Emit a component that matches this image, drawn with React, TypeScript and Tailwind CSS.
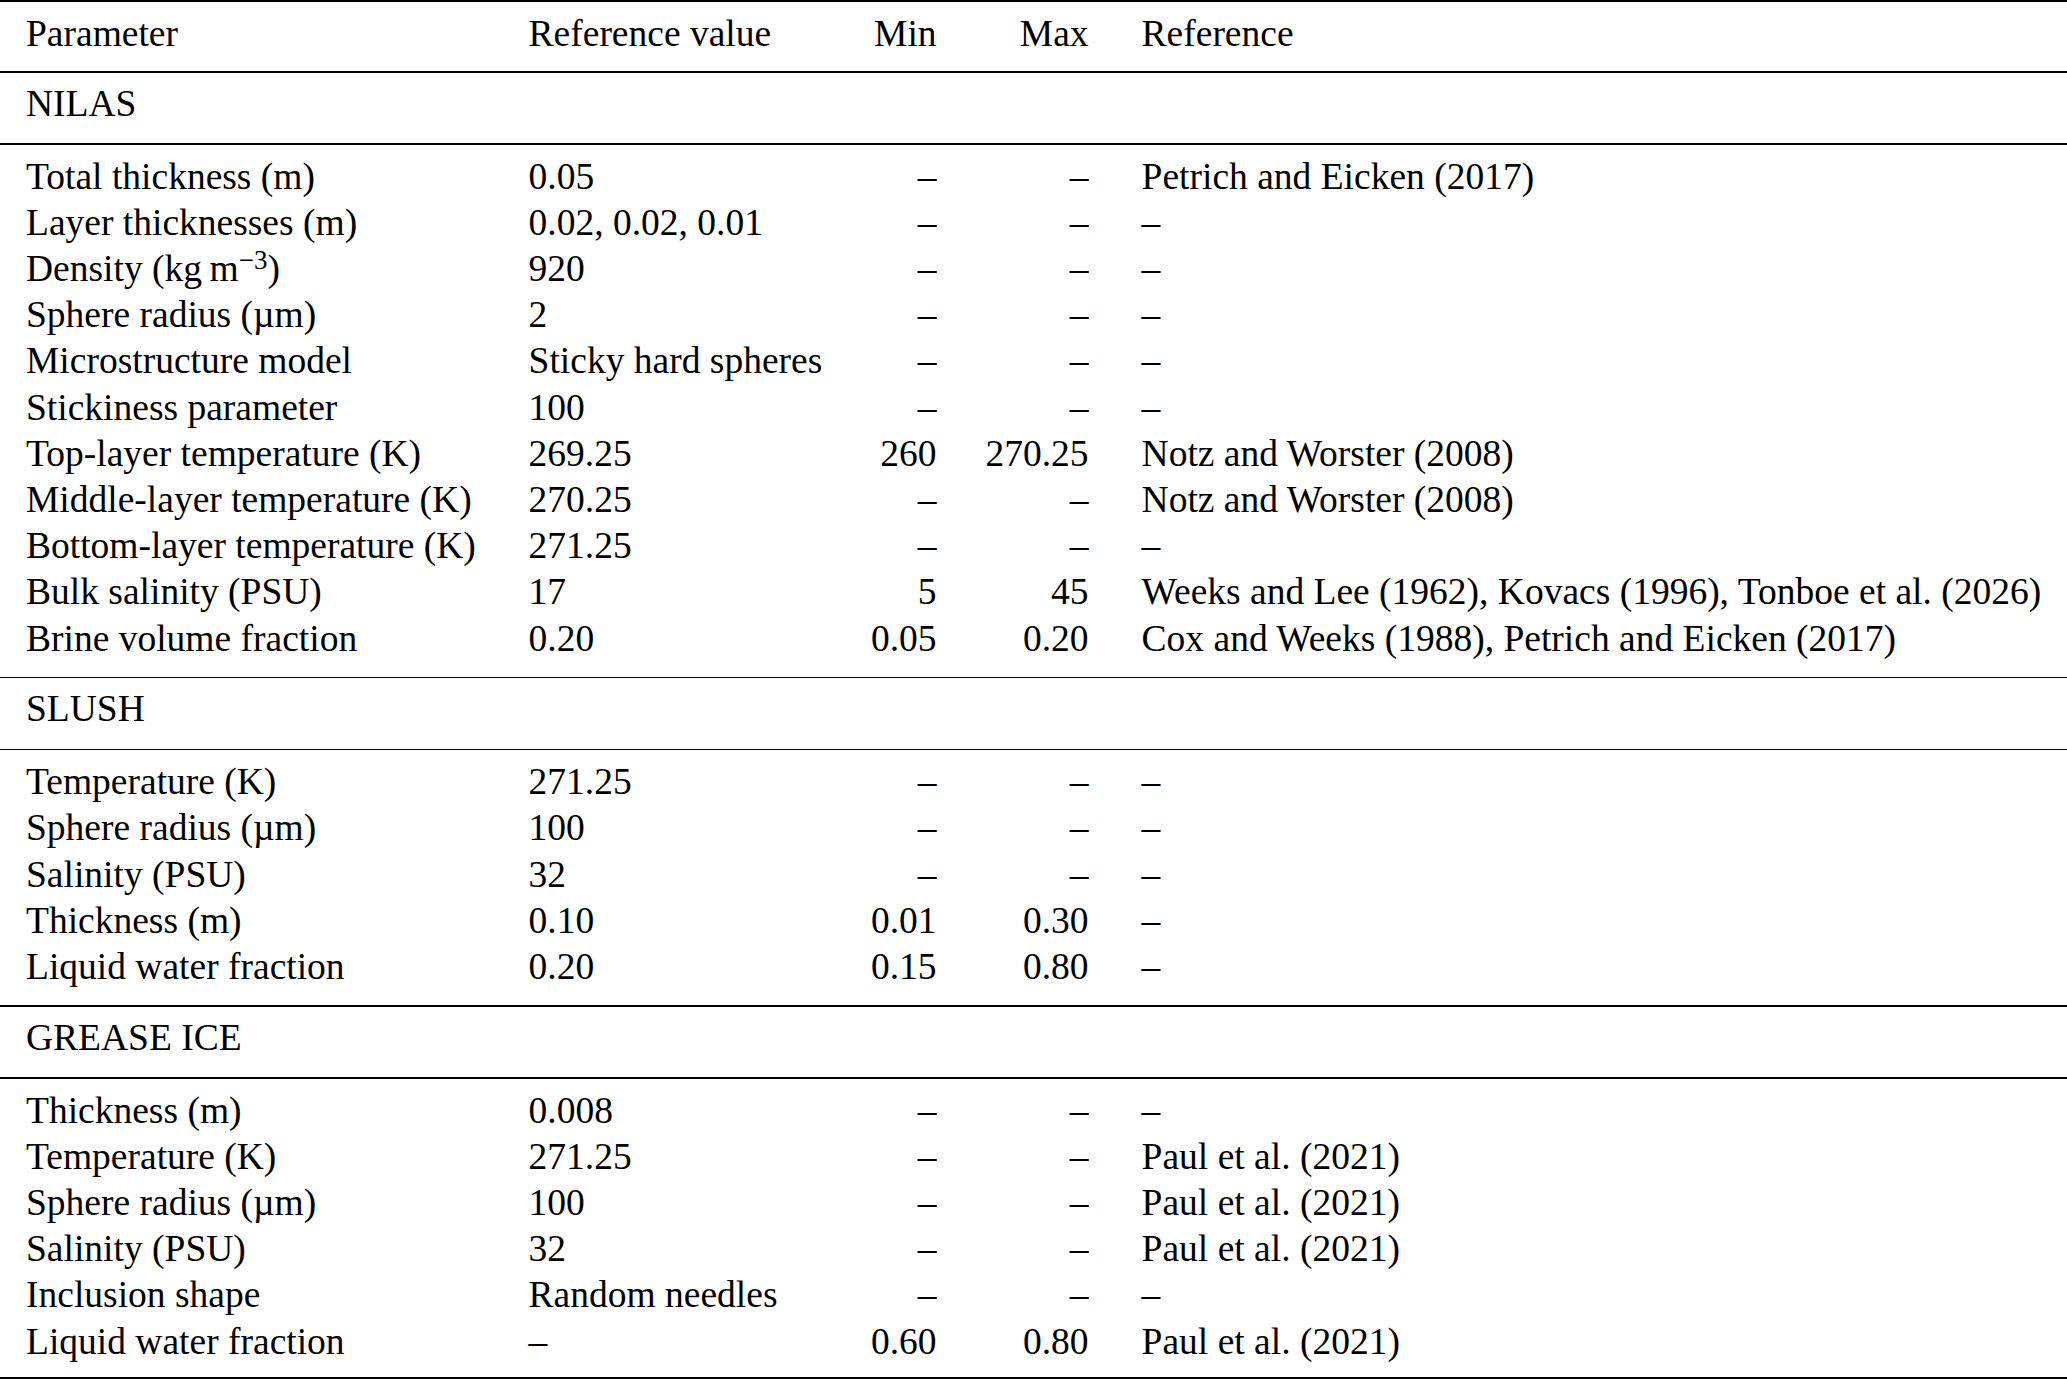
import React from "react";

type Row = [React.ReactNode, string, string, string, string];

const D = "\u2013";

const nilas: Row[] = [
  ["Total thickness (m)", "0.05", D, D, "Petrich and Eicken (2017)"],
  ["Layer thicknesses (m)", "0.02, 0.02, 0.01", D, D, D],
  [
    <>
      Density (kg{"\u2009"}m<sup className="text-[72%] top-[-0.45em]">{"\u22123"}</sup>)
    </>,
    "920",
    D,
    D,
    D,
  ],
  ["Sphere radius (\u00b5m)", "2", D, D, D],
  ["Microstructure model", "Sticky hard spheres", D, D, D],
  ["Stickiness parameter", "100", D, D, D],
  ["Top-layer temperature (K)", "269.25", "260", "270.25", "Notz and Worster (2008)"],
  ["Middle-layer temperature (K)", "270.25", D, D, "Notz and Worster (2008)"],
  ["Bottom-layer temperature (K)", "271.25", D, D, D],
  ["Bulk salinity (PSU)", "17", "5", "45", "Weeks and Lee (1962), Kovacs (1996), Tonboe et al. (2026)"],
  ["Brine volume fraction", "0.20", "0.05", "0.20", "Cox and Weeks (1988), Petrich and Eicken (2017)"],
];

const slush: Row[] = [
  ["Temperature (K)", "271.25", D, D, D],
  ["Sphere radius (\u00b5m)", "100", D, D, D],
  ["Salinity (PSU)", "32", D, D, D],
  ["Thickness (m)", "0.10", "0.01", "0.30", D],
  ["Liquid water fraction", "0.20", "0.15", "0.80", D],
];

const grease: Row[] = [
  ["Thickness (m)", "0.008", D, D, D],
  ["Temperature (K)", "271.25", D, D, "Paul et al. (2021)"],
  ["Sphere radius (\u00b5m)", "100", D, D, "Paul et al. (2021)"],
  ["Salinity (PSU)", "32", D, D, "Paul et al. (2021)"],
  ["Inclusion shape", "Random needles", D, D, D],
  ["Liquid water fraction", D, "0.60", "0.80", "Paul et al. (2021)"],
];

const grid =
  "grid grid-cols-[502.6px_340px_68px_152px_1fr] px-[26px] leading-[46.2px] whitespace-nowrap";

function Line({ r }: { r: Row }) {
  return (
    <div className={grid}>
      <div>{r[0]}</div>
      <div>{r[1]}</div>
      <div className="text-right">{r[2]}</div>
      <div className="text-right">{r[3]}</div>
      <div className="pl-[53px]">{r[4]}</div>
    </div>
  );
}

function Block({ rows, last }: { rows: Row[]; last?: boolean }) {
  return (
    <div className={last ? "pt-[9px] pb-[12.5px]" : "pt-[9px] pb-[15px]"}>
      {rows.map((r, i) => (
        <Line key={i} r={r} />
      ))}
    </div>
  );
}

function Title({ t }: { t: string }) {
  return (
    <div className="pt-[8px] pb-[16px]">
      <div className={grid}>
        <div>{t}</div>
      </div>
    </div>
  );
}

const Mid = () => <div className="h-[1.6px] bg-black" />;

export default function App() {
  return (
    <div
      className="w-[2067px] h-[1379px] bg-white text-black text-[37.5px]"
      style={{ fontFamily: '"Liberation Serif", "Times New Roman", serif' }}
    >
      <div className="h-[2px] bg-black" />
      <div className="pt-[9px] pb-[14px]">
        <Line r={["Parameter", "Reference value", "Min", "Max", "Reference"]} />
      </div>
      <Mid />
      <Title t="NILAS" />
      <Mid />
      <Block rows={nilas} />
      <Mid />
      <Title t="SLUSH" />
      <Mid />
      <Block rows={slush} />
      <Mid />
      <Title t="GREASE ICE" />
      <Mid />
      <Block rows={grease} last />
      <div className="h-[2px] bg-black" />
    </div>
  );
}
